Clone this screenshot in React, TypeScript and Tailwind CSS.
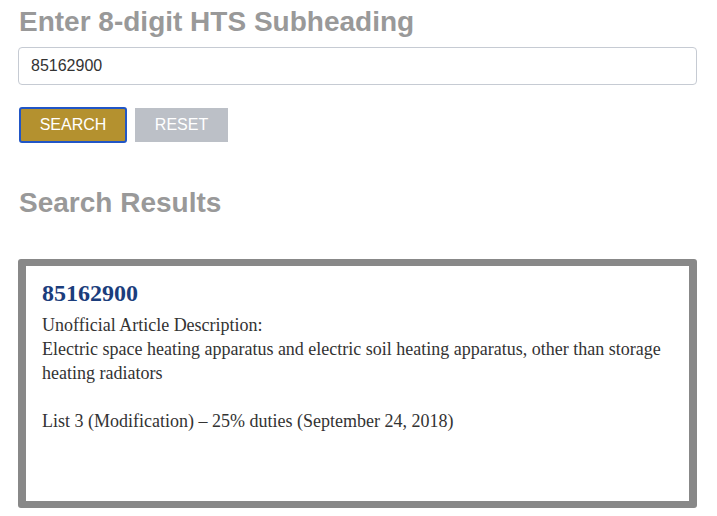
import React from "react";

export default function App() {
  return (
    <div className="min-h-screen bg-white pl-[18px] pr-[20px] pt-[6px]" style={{ fontFamily: '"Liberation Sans", Arial, sans-serif' }}>
      <h1 className="ml-px text-[28px] leading-[32px] font-bold text-[#999999]">Enter 8-digit HTS Subheading</h1>
      <input
        type="text"
        defaultValue="85162900"
        className="mt-[9px] block h-[38px] w-full rounded-[4px] border border-[#c6cbd3] bg-white pl-3 text-[16px] text-[#333333] outline-none"
      />
      <div className="mt-[22px] flex items-center gap-2 pl-px">
        <button className="flex h-[36px] w-[108px] items-center justify-center rounded-[3px] border-2 border-[#2156c6] bg-[#b4912f] text-[16px] text-white">
          SEARCH
        </button>
        <button className="flex h-[34px] w-[93px] items-center justify-center bg-[#bcc0c7] text-[16px] text-white">
          RESET
        </button>
      </div>
      <h2 className="ml-px mt-[44px] text-[28px] leading-[32px] font-bold text-[#999999]">Search Results</h2>
      <div className="mt-[40px] h-[249px] rounded-[3px] border-x-[8px] border-y-[7px] border-[#888888] bg-white px-4 pt-[13px]" style={{ fontFamily: '"Liberation Serif", "Times New Roman", serif' }}>
        <div className="text-[24px] leading-[28px] font-bold text-[#1b3d7c]">85162900</div>
        <p className="mt-[6px] text-[18px] leading-[24px] text-[#333333]">
          Unofficial Article Description:
          <br />
          Electric space heating apparatus and electric soil heating apparatus, other than storage heating radiators
          <br />
          <br />
          List 3 (Modification) – 25% duties (September 24, 2018)
        </p>
      </div>
    </div>
  );
}
